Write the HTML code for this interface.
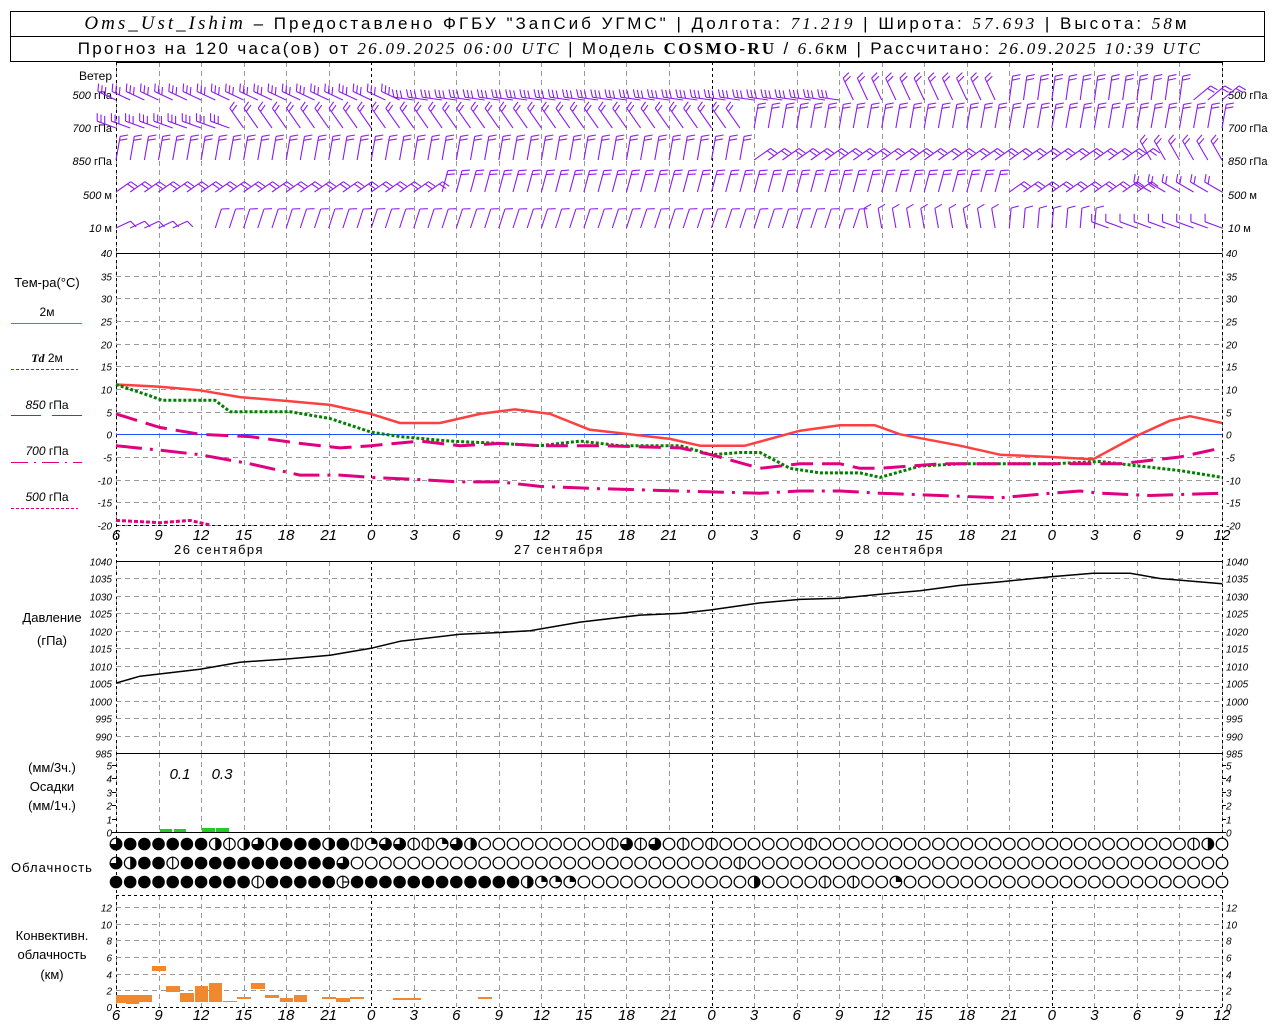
<!DOCTYPE html>
<html><head><meta charset="utf-8"><style>
html,body{margin:0;padding:0;background:#fff;width:1280px;height:1024px;overflow:hidden}
svg{display:block}
text{font-family:"Liberation Sans","DejaVu Sans",sans-serif;fill:#000}
.hd{font-size:17px}
.it{font-family:"Liberation Serif",serif;font-style:italic}
.lb{font-size:12px}
.tk{font-size:10px;font-style:italic}
.ax{font-size:15px;font-style:italic}
</style></head><body>
<svg id="s" width="1280" height="1024" xmlns="http://www.w3.org/2000/svg">
<rect x="10.5" y="11.5" width="1254" height="50" fill="none" stroke="#000"/>
<line x1="10" y1="36.5" x2="1265" y2="36.5" stroke="#000"/>
<text x="637" y="29" class="hd" text-anchor="middle" letter-spacing="3"><tspan class="it" font-size="19">Oms_Ust_Ishim</tspan> – Предоставлено ФГБУ "ЗапСиб УГМС" | Долгота: <tspan class="it">71.219</tspan> | Широта: <tspan class="it">57.693</tspan> | Высота: <tspan class="it">58</tspan>м</text>
<text x="640" y="54" class="hd" text-anchor="middle" letter-spacing="2.3">Прогноз на 120 часа(ов) от <tspan class="it">26.09.2025 06:00 UTC</tspan>  | Модель <tspan font-family="Liberation Serif" font-weight="bold">COSMO-RU</tspan> / <tspan class="it">6.6</tspan>км | Рассчитано: <tspan class="it">26.09.2025 10:39 UTC</tspan></text>
<g class="lb">
<text x="112" y="80" text-anchor="end">Ветер</text>
<text x="112" y="99" text-anchor="end" font-size="11"><tspan font-style="italic">500</tspan> гПа</text>
<text x="112" y="132" text-anchor="end" font-size="11"><tspan font-style="italic">700</tspan> гПа</text>
<text x="112" y="165" text-anchor="end" font-size="11"><tspan font-style="italic">850</tspan> гПа</text>
<text x="112" y="199" text-anchor="end" font-size="11"><tspan font-style="italic">500</tspan>  м</text>
<text x="112" y="232" text-anchor="end" font-size="11"><tspan font-style="italic">10</tspan>   м</text>
<text x="1228" y="99" font-size="11"><tspan font-style="italic">500</tspan> гПа</text>
<text x="1228" y="132" font-size="11"><tspan font-style="italic">700</tspan> гПа</text>
<text x="1228" y="165" font-size="11"><tspan font-style="italic">850</tspan> гПа</text>
<text x="1228" y="199" font-size="11"><tspan font-style="italic">500</tspan>  м</text>
<text x="1228" y="232" font-size="11"><tspan font-style="italic">10</tspan>   м</text>
<text x="47" y="287" text-anchor="middle" font-size="13">Тем-ра(°C)</text>
<text x="47" y="316" text-anchor="middle">2м</text>
<text x="47" y="362" text-anchor="middle"><tspan font-family="Liberation Serif" font-weight="bold" font-style="italic">Td</tspan>  2м</text>
<text x="47" y="409" text-anchor="middle"><tspan font-style="italic">850</tspan> гПа</text>
<text x="47" y="455" text-anchor="middle"><tspan font-style="italic">700</tspan> гПа</text>
<text x="47" y="501" text-anchor="middle"><tspan font-style="italic">500</tspan> гПа</text>
<text x="52" y="622" text-anchor="middle" font-size="13">Давление</text>
<text x="52" y="645" text-anchor="middle" font-size="13">(гПа)</text>
<text x="52" y="772" text-anchor="middle" font-size="13">(мм/3ч.)</text>
<text x="52" y="791" text-anchor="middle" font-size="13">Осадки</text>
<text x="52" y="810" text-anchor="middle" font-size="13">(мм/1ч.)</text>
<text x="52" y="872" text-anchor="middle" font-size="13" letter-spacing="1">Облачность</text>
<text x="52" y="940" text-anchor="middle" font-size="13">Конвективн.</text>
<text x="52" y="959" text-anchor="middle" font-size="13">облачность</text>
<text x="52" y="979" text-anchor="middle" font-size="13">(км)</text>
<text x="180" y="779" text-anchor="middle" class="ax">0.1</text>
<text x="222" y="779" text-anchor="middle" class="ax">0.3</text>
<text x="219" y="554" text-anchor="middle" font-size="13" letter-spacing="1.5">26 сентября</text>
<text x="559" y="554" text-anchor="middle" font-size="13" letter-spacing="1.5">27 сентября</text>
<text x="899" y="554" text-anchor="middle" font-size="13" letter-spacing="1.5">28 сентября</text>
</g>
<line x1="11" y1="323.5" x2="82" y2="323.5" stroke="#ff4040"/>
<line x1="11" y1="369.5" x2="78" y2="369.5" stroke="#008000" stroke-dasharray="3,2"/>
<line x1="11" y1="415.5" x2="41" y2="415.5" stroke="#e0007f"/><line x1="52" y1="415.5" x2="82" y2="415.5" stroke="#e0007f"/>
<line x1="11" y1="462.5" x2="82" y2="462.5" stroke="#e0007f" stroke-dasharray="17,6,2,6"/>
<line x1="11" y1="508.5" x2="78" y2="508.5" stroke="#e0007f" stroke-dasharray="3,2"/>
<g id="g"></g>
</svg>
<script>
var S=document.getElementById('g'),h='';
function X(hr){return 116+hr*14.1795;}
function L(x1,y1,x2,y2,c,w,d){h+='<line x1="'+x1+'" y1="'+y1+'" x2="'+x2+'" y2="'+y2+'" stroke="'+c+'" stroke-width="'+(w||1)+'"'+(d?' stroke-dasharray="'+d+'"':'')+'/>';}
function T(x,y,s,a,c){h+='<text x="'+x+'" y="'+y+'" text-anchor="'+(a||'start')+'" class="'+(c||'tk')+'">'+s+'</text>';}
var segs=[[62,253],[253,525],[561,753],[753,832],[895,1007]];
for(var k=0;k<=26;k++){var x=Math.round(X(k*3))+0.5;var day=(k*3+6)%24==0;
 segs.forEach(function(s){L(x,s[0],x,s[1],day?'#000':'#999',1,day?'3,3':'5,4');});}
L(116.5,62,116.5,1007,'#000',1,'3,3');L(1222.5,62,1222.5,1007,'#000',1,'3,3');
function yT(v){return 253+(40-v)*4.533;}
for(var v=35;v>=-20;v-=5){var y=Math.round(yT(v))+0.5;L(116,y,1222,y,'#999',1,'5,4');T(112,y+4,v,'end');T(1226,y+4,v);}
T(112,257,40,'end');T(1226,257,40);
L(116,434.5,1222,434.5,'#2050ff',1);
function yP(p){return 561+(1040-p)*3.49;}
for(var p=1035;p>=990;p-=5){var y=Math.round(yP(p))+0.5;L(116,y,1222,y,'#999',1,'5,4');}
for(var p=1040;p>=985;p-=5){var y=Math.round(yP(p))+0.5;T(112,y+4,p,'end');T(1226,y+4,p);}
for(var r=0;r<=5;r++){var y=Math.round(832-r*13.4)+0.5;L(112,y,116,y,'#000');L(1222,y,1226,y,'#000');T(112,y+4,r,'end');T(1226,y+4,r);}
function yC(v){return 1007-v*8.33;}
for(var c=2;c<=12;c+=2){var y=Math.round(yC(c))+0.5;L(116,y,1222,y,'#999',1,'5,4');T(112,y+4,c,'end');T(1226,y+4,c);}
T(112,1011,0,'end');T(1226,1011,0);
[62,253,561,753,832].forEach(function(y){L(116,y+0.5,1222,y+0.5,'#000');});
L(116,1007.5,1222,1007.5,'#000',1,'3,3');L(116,895.5,1222,895.5,'#000',1,'3,3');L(116,525.5,1222,525.5,'#000',1,'3,3');
for(var k=0;k<=26;k++){var hh=(k*3+6)%24;T(X(k*3),540,hh,'middle','ax');T(X(k*3),1020,hh,'middle','ax');}
function curve(pts,f,c,w,d){var s='';pts.forEach(function(p,i){s+=(i?'L':'M')+p[0]+' '+f(p[1]).toFixed(1);});
 h+='<path d="'+s+'" fill="none" stroke="'+c+'" stroke-width="'+w+'"'+(d?' stroke-dasharray="'+d+'"':'')+' stroke-linejoin="round"/>';}
curve([[116,11],[160,10.5],[200,9.7],[240,8.2],[290,7.3],[330,6.5],[371,4.5],[400,2.5],[440,2.5],[480,4.5],[515,5.5],[550,4.5],[590,1],[630,0],[670,-1],[700,-2.5],[745,-2.5],[800,0.8],[840,2],[875,2],[900,0],[960,-2.5],[1000,-4.5],[1051,-5],[1093,-5.5],[1135,-0.5],[1170,3],[1190,4],[1222,2.5]],yT,'#ff4040',2.5);
curve([[116,11],[150,8.5],[162,7.5],[215,7.5],[230,5],[290,5],[330,3.5],[371,0.5],[400,-0.5],[450,-1.5],[500,-2],[540,-2.5],[580,-1.5],[620,-2.5],[680,-2.5],[711,-4.5],[740,-4],[760,-4],[790,-7.5],[820,-8.5],[860,-8.5],[880,-9.5],[920,-7],[960,-6.5],[1051,-6.5],[1100,-6],[1140,-7],[1180,-8],[1222,-9.5]],yT,'#008000',3,'3,2');
curve([[116,4.5],[160,1.5],[200,0],[250,-0.5],[300,-2],[340,-3],[371,-2.5],[420,-1.5],[460,-2.5],[500,-2],[540,-2.5],[600,-2.5],[680,-3],[711,-4.5],[760,-7.5],[800,-6.5],[840,-6.5],[860,-7.5],[880,-7.5],[940,-6.5],[980,-6.5],[1120,-6.5],[1180,-5],[1222,-3]],yT,'#e0007f',3,'22,9');
curve([[116,-2.5],[160,-3.5],[200,-4.5],[250,-6.5],[300,-9],[340,-9],[371,-9.5],[420,-10],[460,-10.5],[500,-10.5],[540,-11.5],[600,-12],[680,-12.5],[760,-13],[800,-12.5],[840,-12.5],[880,-13],[940,-13.5],[1000,-14],[1051,-13],[1080,-12.5],[1100,-13],[1150,-13.5],[1222,-13]],yT,'#e0007f',3,'26,8,3,8');
curve([[116,-19],[160,-19.5],[190,-19],[210,-20]],yT,'#e0007f',3,'4,2');
curve([[116,1005],[140,1007],[200,1009],[240,1011],[290,1012],[330,1013],[371,1015],[400,1017],[460,1019],[500,1019.5],[530,1020],[580,1022.5],[640,1024.5],[680,1025],[711,1026],[760,1028],[800,1029],[840,1029.3],[880,1030.5],[920,1031.5],[960,1033],[1000,1034],[1051,1035.5],[1093,1036.5],[1130,1036.5],[1160,1035],[1222,1033.5]],yP,'#000',1.5);
[[160,172,3],[174,186,3],[202,215,4],[216,229,4]].forEach(function(b){h+='<rect x="'+b[0]+'" y="'+(832-b[2])+'" width="'+(b[1]-b[0])+'" height="'+b[2]+'" fill="#22cc22"/>';});
[[116,126,995,1003],[126,139,995,1004],[139,152,995,1002],[152,166,966,971],[166,180,986,992],[180,194,993,1002],[195,208,986,1002],[209,222,983,1002],[223,237,1001,1002],[237,251,997,999],[251,265,983,989],[265,279,995,998],[280,293,998,1002],[294,307,995,1002],[322,336,997,999],[336,350,998,1002],[350,364,997,999],[393,421,998,1000],[478,492,997,999]].forEach(function(b){h+='<rect x="'+b[0]+'" y="'+b[2]+'" width="'+(b[1]-b[0])+'" height="'+(b[3]-b[2])+'" fill="#f08830"/>';});
var rows=[
'QFFFFFFWVWQWFFFWFVqQQVVqQWEEEEEEEEEVQVQEVEVEEEEEEVEEEEEEEEEEEEEEEEEEEEEEEEEEVW',
'QWFFVFFFFFFFFFFFQEEEEEEEEEEEEEEEEEEEEEEEEEEEVEEEEEEEEEEEEEEEEEEEEEEEEEEEEEEEEE',
'FFFFFFFFFFVFFFFFHFFFFFFFFFFFFWqqqEEEEEEEEEEEEWEEEEVEVEEqEEEEEEEEEEEEEEEEEEEEEEE'];
var cy=[844,863,882];
rows.forEach(function(r,ri){for(var i=0;i<79;i++){var cx=X(i),y=cy[ri],c=r[i]||'E',R=6.3;
 if(c=='F'){h+='<circle cx="'+cx+'" cy="'+y+'" r="'+R+'" fill="#000"/>';continue;}
 h+='<circle cx="'+cx+'" cy="'+y+'" r="'+(R-0.5)+'" fill="#fff" stroke="#000" stroke-width="1.2"/>';
 if(c=='V'||c=='H')L(cx,y-R,cx,y+R,'#000',1.2);
 if(c=='H')L(cx,y,cx+R,y,'#000',1.2);
 if(c=='W')h+='<path d="M'+cx+' '+(y-R)+'A'+R+' '+R+' 0 0 1 '+cx+' '+(y+R)+'Z"/>';
 if(c=='Q')h+='<path d="M'+cx+' '+y+'L'+cx+' '+(y-R)+'A'+R+' '+R+' 0 1 1 '+(cx-R)+' '+y+'Z"/>';
 if(c=='q')h+='<path d="M'+cx+' '+y+'L'+cx+' '+(y-R)+'A'+R+' '+R+' 0 0 1 '+(cx+R)+' '+y+'Z"/>';
}});
var P='#8c1cf0';
function ang(spec,x){for(var i=0;i<spec.length;i++)if(x<spec[i][0])return spec[i];return spec[spec.length-1];}
var wr=[[100,[[400,-155,3,20],[850,-172,3,20],[1000,-115,2,24],[1180,-82,2,24],[1300,-40,2,22]]],
[128,[[240,-160,3,20],[740,-125,2,24],[1300,-80,2,24]]],
[160,[[750,-80,2,24],[1150,-35,2,20],[1300,-120,2,22]]],
[192,[[430,-35,2,18],[1000,-75,2,22],[1140,-35,2,18],[1300,-150,2,20]]],
[228,[[200,-25,1,16],[860,-72,1,20],[1000,-100,1,20],[1100,-85,1,20],[1300,-160,1,18]]]];
wr.forEach(function(w){for(var i=0;i<79;i++){if(w[0]==228&&i>=5&&i<=6)continue;var x=X(i),a=ang(w[1],x),t=a[1]*Math.PI/180,len=a[3];
 var ex=x+Math.cos(t)*len,ey=w[0]+Math.sin(t)*len;L(x.toFixed(1),w[0],ex.toFixed(1),ey.toFixed(1),P,1.1);
 var b=t+70*Math.PI/180;for(var n=0;n<a[2];n++){var sx=ex-Math.cos(t)*n*4,sy=ey-Math.sin(t)*n*4;
 L(sx.toFixed(1),sy.toFixed(1),(sx+Math.cos(b)*8).toFixed(1),(sy+Math.sin(b)*8).toFixed(1),P,1.1);}}});
S.innerHTML=h;
</script>
</body></html>
